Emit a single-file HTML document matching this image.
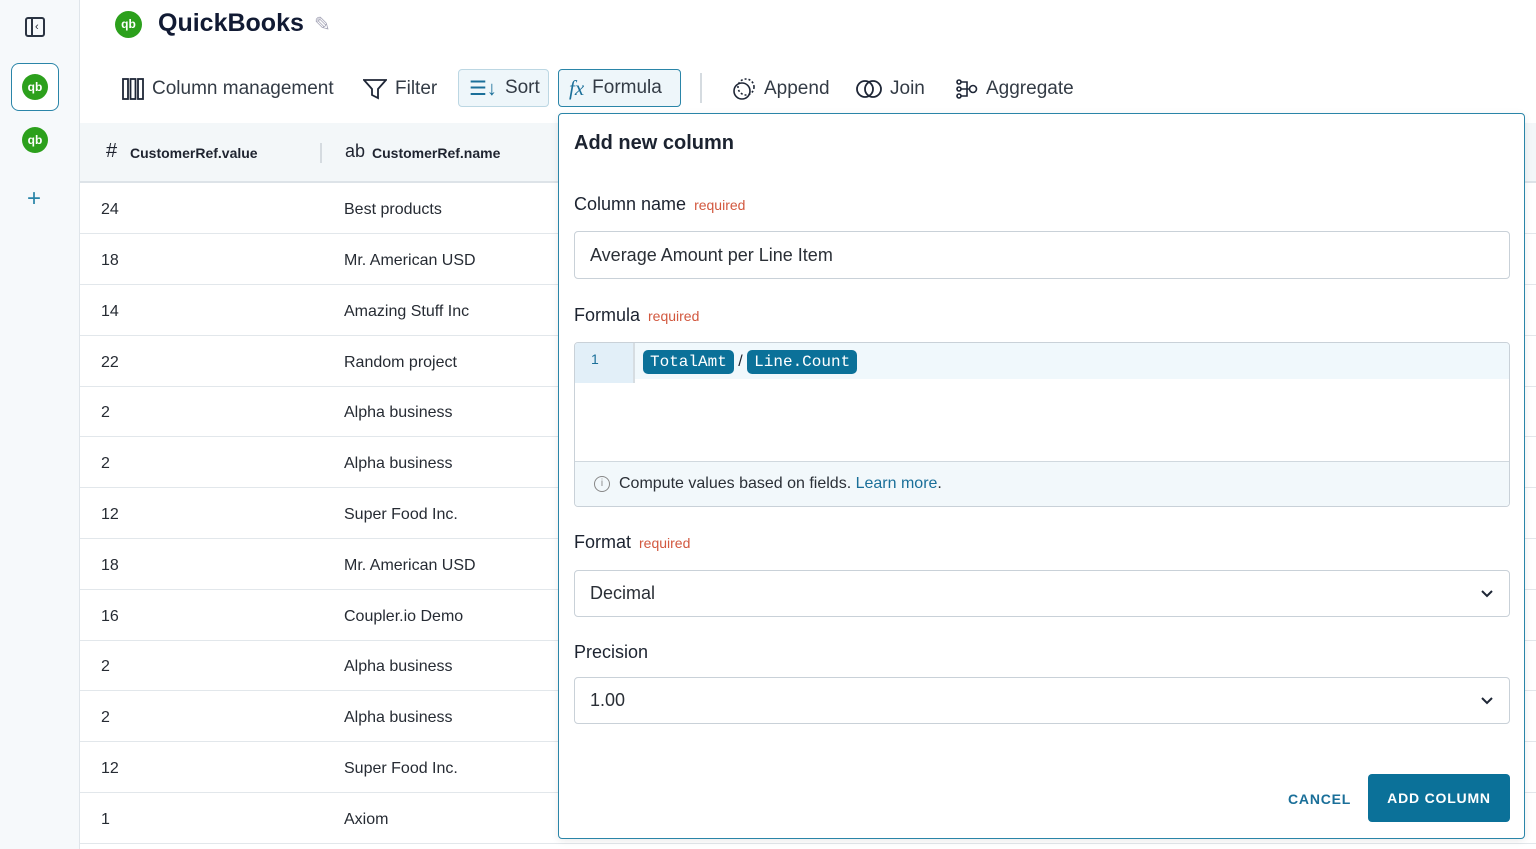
<!DOCTYPE html>
<html><head><style>
*{box-sizing:border-box;margin:0;padding:0}
body{width:1536px;height:849px;overflow:hidden;background:#fff;font-family:"Liberation Sans",sans-serif;color:#1f2430;position:relative}
.side{position:absolute;left:0;top:0;width:80px;height:849px;background:#f6f9fb;border-right:1px solid #dfe5ea}
.qb{position:absolute;width:26px;height:26px;border-radius:50%;background:#2ca01c;color:#fff;font-size:12px;text-align:center;line-height:26px;font-weight:bold}
.abs{position:absolute}
.tb{position:absolute;top:71px;height:36px;font-size:19px;color:#333b45;display:flex;align-items:center;gap:8px;padding:0 10px}
.hdr{position:absolute;left:80px;top:123px;width:1456px;height:60px;background:#f3f7f9;border-bottom:2px solid #dde3e8}
.row{position:absolute;left:80px;width:1456px;height:51px;border-bottom:1px solid #e2e7eb;font-size:16px;color:#262b33}
.row span{position:absolute;top:18px}
.panel{position:absolute;left:558px;top:113px;width:967px;height:726px;background:#fff;border:1.5px solid #2a85a8;border-radius:4px;box-shadow:0 2px 8px rgba(0,0,0,.08)}
.lbl{position:absolute;left:15px;font-size:18px;color:#1c2330}
.req{font-size:14px;color:#d2583f;margin-left:8px}
.inp{position:absolute;left:15px;width:936px;border:1px solid #c9d1d8;border-radius:4px;font-size:18px;color:#2a2f36;padding-left:15px;display:flex;align-items:center}
.chev{position:absolute;right:16px;top:17px}
.chip{display:inline-block;background:#0b7199;color:#fff;font-family:"Liberation Mono",monospace;font-size:16px;padding:3px 7px;border-radius:5px}
</style></head><body>
<div class="side">
 <div class="abs" style="left:25px;top:17px;width:20px;height:20px;border:2px solid #2b3442;border-radius:3px"><div style="position:absolute;left:4px;top:0;width:2px;height:16px;background:#2b3442"></div><div style="position:absolute;left:8px;top:2px;font-size:11px;line-height:12px">‹</div></div>
 <div class="abs" style="left:11px;top:63px;width:48px;height:48px;border:1.5px solid #2a85a8;border-radius:8px;background:#fff"></div>
 <div class="qb" style="left:22px;top:74px">qb</div>
 <div class="qb" style="left:22px;top:127px">qb</div>
 <div class="abs" style="left:27px;top:185px;font-size:24px;color:#2a85a8">+</div>
</div>
<div class="qb" style="left:115px;top:11px;width:27px;height:27px;line-height:27px">qb</div>
<div class="abs" style="left:158px;top:9px;font-size:25px;font-weight:bold;color:#111a33">QuickBooks</div>
<div class="abs" style="left:314px;top:12px;font-size:20px;color:#aab">✎</div>
<div class="tb" style="left:112px">
 <svg width="22" height="22" viewBox="0 0 22 22" fill="none" stroke="#1e2636" stroke-width="1.8"><rect x="1" y="1" width="5" height="20"/><rect x="8.5" y="1" width="5" height="20"/><rect x="16" y="1" width="5" height="20"/></svg>Column management</div>
<div class="tb" style="left:353px"><svg width="24" height="22" viewBox="0 0 24 22" fill="none" stroke="#1e2636" stroke-width="1.8"><path d="M1 2h22l-8 9v9l-6-3v-6z"/></svg>Filter</div>
<div class="tb" style="left:458px;top:69px;height:38px;width:91px;background:#eef6fa;border:1px solid #bcd7e3;border-radius:4px;color:#333b45"><span style="color:#1a6f99;font-size:20px">☰↓</span>Sort</div>
<div class="tb" style="left:558px;top:69px;height:38px;width:123px;background:#eef6fa;border:1.5px solid #2a85a8;border-radius:4px"><span style="color:#1a6f99;font-style:italic;font-family:'Liberation Serif',serif;font-size:21px">fx</span>Formula</div>
<div class="abs" style="left:700px;top:73px;width:2px;height:30px;background:#d5dbe0"></div>
<div class="tb" style="left:722px"><svg width="24" height="24" viewBox="0 0 24 24" fill="none" stroke="#1e2636" stroke-width="1.6"><circle cx="10" cy="14" r="8"/><circle cx="14" cy="10" r="8" stroke-dasharray="2 2"/></svg>Append</div>
<div class="tb" style="left:846px"><svg width="26" height="20" viewBox="0 0 26 20" fill="none" stroke="#1e2636" stroke-width="1.8"><circle cx="9" cy="10" r="8"/><circle cx="17" cy="10" r="8"/></svg>Join</div>
<div class="tb" style="left:946px"><svg width="22" height="22" viewBox="0 0 22 22" fill="none" stroke="#1e2636" stroke-width="1.6"><circle cx="3" cy="4" r="2"/><circle cx="3" cy="11" r="2"/><circle cx="3" cy="18" r="2"/><path d="M5 4h6v14H5M5 11h8"/><circle cx="17" cy="11" r="3.5"/></svg>Aggregate</div>
<div class="hdr">
 <div class="abs" style="left:26px;top:17px;font-size:20px">#</div>
 <div class="abs" style="left:50px;top:22px;font-size:14px;font-weight:bold">CustomerRef.value</div>
 <div class="abs" style="left:240px;top:20px;width:2px;height:20px;background:#d5dbe0"></div>
 <div class="abs" style="left:265px;top:18px;font-size:18px">ab</div>
 <div class="abs" style="left:292px;top:22px;font-size:14px;font-weight:bold">CustomerRef.name</div>
</div>
<div class="row" style="top:183px"><span style="left:21px">24</span><span style="left:264px">Best products</span></div>
<div class="row" style="top:234px"><span style="left:21px">18</span><span style="left:264px">Mr. American USD</span></div>
<div class="row" style="top:285px"><span style="left:21px">14</span><span style="left:264px">Amazing Stuff Inc</span></div>
<div class="row" style="top:336px"><span style="left:21px">22</span><span style="left:264px">Random project</span></div>
<div class="row" style="top:386px"><span style="left:21px">2</span><span style="left:264px">Alpha business</span></div>
<div class="row" style="top:437px"><span style="left:21px">2</span><span style="left:264px">Alpha business</span></div>
<div class="row" style="top:488px"><span style="left:21px">12</span><span style="left:264px">Super Food Inc.</span></div>
<div class="row" style="top:539px"><span style="left:21px">18</span><span style="left:264px">Mr. American USD</span></div>
<div class="row" style="top:590px"><span style="left:21px">16</span><span style="left:264px">Coupler.io Demo</span></div>
<div class="row" style="top:640px"><span style="left:21px">2</span><span style="left:264px">Alpha business</span></div>
<div class="row" style="top:691px"><span style="left:21px">2</span><span style="left:264px">Alpha business</span></div>
<div class="row" style="top:742px"><span style="left:21px">12</span><span style="left:264px">Super Food Inc.</span></div>
<div class="row" style="top:793px"><span style="left:21px">1</span><span style="left:264px">Axiom</span></div>
<div class="panel">
 <div class="abs" style="left:15px;top:18px;font-size:20px;font-weight:bold;color:#1c2330">Add new column</div>
 <div class="lbl" style="top:80px">Column name<span class="req">required</span></div>
 <div class="inp" style="top:117px;height:48px">Average Amount per Line Item</div>
 <div class="lbl" style="top:191px">Formula<span class="req">required</span></div>
 <div class="abs" style="left:15px;top:228px;width:936px;height:165px;border:1px solid #c9d1d8;border-radius:4px;overflow:hidden">
  <div class="abs" style="left:0;top:0;width:936px;height:36px;background:#f0f8fc"></div>
  <div class="abs" style="left:0;top:0;width:58px;height:40px;background:#e2eff8"></div>
  <div class="abs" style="left:58px;top:0;width:2px;height:40px;background:#d6dde2"></div>
  <div class="abs" style="left:16px;top:8px;font-size:14px;color:#1a6f99">1</div>
  <div class="abs" style="left:68px;top:7px;font-size:16px">
   <span class="chip">TotalAmt</span> / <span class="chip">Line.Count</span></div>
  <div class="abs" style="left:0;top:118px;width:936px;height:47px;background:#f2f8fb;border-top:1px solid #d0d8de"></div>
  <div class="abs" style="left:19px;top:133px;width:16px;height:16px;border:1px solid #888;border-radius:50%;font-size:10px;text-align:center;line-height:14px;color:#888">i</div>
  <div class="abs" style="left:44px;top:132px;font-size:16px;color:#2a2f36">Compute values based on fields. <span style="color:#1a6f99">Learn more</span>.</div>
 </div>
 <div class="lbl" style="top:418px">Format<span class="req">required</span></div>
 <div class="inp" style="top:456px;height:47px">Decimal<svg class="chev" width="12" height="10" viewBox="0 0 12 10" fill="none" stroke="#1e2636" stroke-width="2"><path d="M1 3l5 5 5-5"/></svg></div>
 <div class="lbl" style="top:528px">Precision</div>
 <div class="inp" style="top:563px;height:47px">1.00<svg class="chev" width="12" height="10" viewBox="0 0 12 10" fill="none" stroke="#1e2636" stroke-width="2"><path d="M1 3l5 5 5-5"/></svg></div>
 <div class="abs" style="left:729px;top:677px;font-size:14px;font-weight:bold;color:#1a6f99;letter-spacing:.8px">CANCEL</div>
 <div class="abs" style="left:809px;top:660px;width:142px;height:48px;background:#0b7199;border-radius:4px;color:#fff;font-size:14px;font-weight:bold;letter-spacing:.8px;text-align:center;line-height:48px">ADD COLUMN</div>
</div>
</body></html>
